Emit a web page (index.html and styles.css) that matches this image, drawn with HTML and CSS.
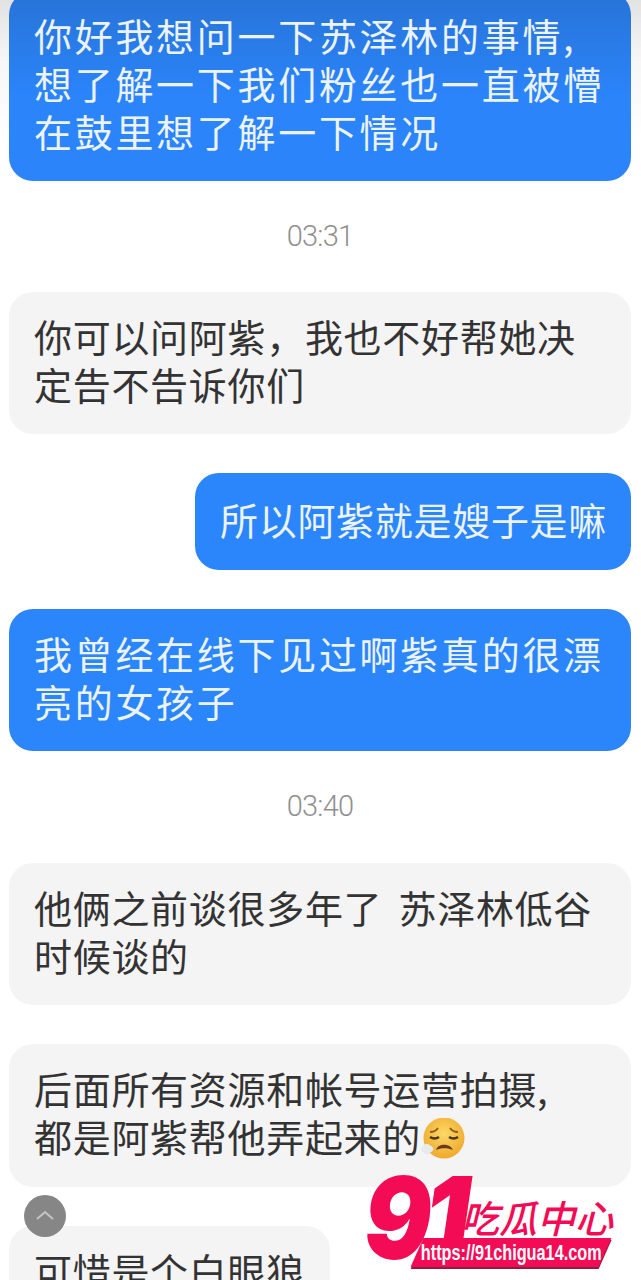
FILE: index.html
```html
<!DOCTYPE html>
<html lang="zh-CN">
<head>
    <meta charset="UTF-8">
    <meta name="viewport" content="width=device-width, initial-scale=1.0">
    <title>聊天记录</title>
    <link rel="stylesheet" href="styles.css">
</head>
<body>
    <div class="chat">
        <div class="bubble blue first">你好我想问一下苏泽林的事情,<br>想了解一下我们粉丝也一直被懵<br>在鼓里想了解一下情况</div>
        <div class="time">03:31</div>
        <div class="bubble gray">你可以问阿紫，我也不好帮她决<br>定告不告诉你们</div>
        <div class="bubble blue short">所以阿紫就是嫂子是嘛</div>
        <div class="bubble blue">我曾经在线下见过啊紫真的很漂<br>亮的女孩子</div>
        <div class="time second">03:40</div>
        <div class="bubble gray spaced">他俩之前谈很多年了 苏泽林低谷<br>时候谈的</div>
        <div class="bubble gray tall">后面所有资源和帐号运营拍摄,<br>都是阿紫帮他弄起来的<svg class="emoji" viewBox="0 0 44 42" width="44" height="42">
            <defs>
                <radialGradient id="face" cx="50%" cy="40%" r="60%">
                    <stop offset="0" stop-color="#fbd966"/>
                    <stop offset="1" stop-color="#f0a92c"/>
                </radialGradient>
            </defs>
            <circle cx="23" cy="20" r="20.5" fill="url(#face)"/>
            <path d="M9 14c3 0 6 -1 8 -4M37 14c-3 0 -6 -1 -8 -4" stroke="#8a5a20" stroke-width="1.8" fill="none"/>
            <path d="M9 19c3 2 6 2 9 0M28 19c3 2 6 2 9 0" stroke="#4a3520" stroke-width="2.6" fill="none"/>
            <path d="M15 32c2 -7 14 -7 17 0c-5 -2.500 -12 -2.500 -17 0z" fill="#6b3a1e"/>
            <path d="M2 28c3 -3 6 -2 8 0c3 1 3 5 0 6c-2 3 -6 3 -8 0c-3 -1 -3 -5 0 -6z" fill="#e6ecec"/>
        </svg></div>
        <div class="bubble gray last">可惜是个白眼狼</div>
    </div>

    <button class="to-top" type="button">
        <svg viewBox="0 0 42 42" width="42" height="42">
            <path d="M13 24l8 -7l8 7" stroke="#c4c4c4" stroke-width="2" fill="none"/>
        </svg>
    </button>

    <div class="logo">
        <span class="logo-num">91</span>
        <span class="logo-name">吃瓜中心</span>
        <div class="logo-url"><span>https://91chigua14.com</span></div>
    </div>
</body>
</html>
```

FILE: styles.css
```css
html, body {
    margin: 0;
    padding: 0;
}
body {
    position: relative;
    width: 641px;
    height: 1280px;
    overflow: hidden;
    background: linear-gradient(#e2e2e2 0, #f6f6f6 60px, #ffffff 140px);
    font-family: "Noto Sans CJK SC", "Noto Sans", sans-serif;
}
.chat {
    display: flex;
    flex-direction: column;
    padding: 0 10px 0 9px;
    margin-top: -9px;
}
.bubble {
    padding: 20px 25px 26px;
    margin-bottom: 39px;
    border-radius: 24px;
    font-size: 38px;
    line-height: 48px;
    font-weight: 400;
    white-space: nowrap;
}
.blue {
    background: #2b85fb;
    color: #eaf3ff;
    letter-spacing: 2.7px;
}
.first {
    background: linear-gradient(#2773d6, #2b84fa 55%);
    margin-bottom: 35px;
}
.short {
    align-self: flex-end;
    padding: 22px 24px 27px 25px;
    letter-spacing: 0.7px;
}
.gray {
    background: #f4f4f4;
    color: #333333;
    letter-spacing: 0.7px;
}
.spaced {
    word-spacing: 7px;
}
.tall {
    padding-bottom: 27px;
}
.last {
    align-self: flex-start;
    margin-bottom: 0;
}
.time {
    height: 40px;
    margin-bottom: 36px;
    text-align: center;
    font-family: Roboto, sans-serif;
    font-weight: 300;
    font-size: 29px;
    line-height: 40px;
    letter-spacing: -0.8px;
    color: #8f8f8f;
}
.second {
    margin-top: -4px;
    margin-bottom: 37px;
}
.emoji {
    vertical-align: -8px;
}
.to-top {
    position: absolute;
    left: 24px;
    top: 1195px;
    width: 42px;
    height: 42px;
    padding: 0;
    border: 0;
    border-radius: 50%;
    background: #868686;
}
.to-top svg {
    display: block;
}
.logo {
    position: absolute;
    left: 368px;
    top: 1170px;
    width: 250px;
    height: 104px;
    color: #f40b55;
}
.logo-num {
    position: absolute;
    left: -4px;
    top: -9px;
    font-family: Inter, "Liberation Sans", sans-serif;
    font-weight: 900;
    font-style: italic;
    font-size: 100px;
    line-height: 114px;
    letter-spacing: -7px;
    transform: scaleY(1.14);
}
.logo-name {
    position: absolute;
    left: 93px;
    top: 27px;
    font-weight: 500;
    font-style: italic;
    font-size: 38px;
    line-height: 40px;
    white-space: nowrap;
}
.logo-url {
    position: absolute;
    left: 49px;
    top: 68px;
    display: flex;
    justify-content: center;
    width: 188px;
    height: 29px;
    background: #f40b55;
    transform: skewX(-24deg);
    box-shadow: 1px 2px 0 #8c1c40;
}
.logo-url span {
    flex: none;
    transform: skewX(24deg) scaleX(0.74);
    font-family: "Liberation Sans", sans-serif;
    font-weight: 700;
    font-size: 22px;
    line-height: 29px;
    color: #ffffff;
    white-space: nowrap;
}
```
